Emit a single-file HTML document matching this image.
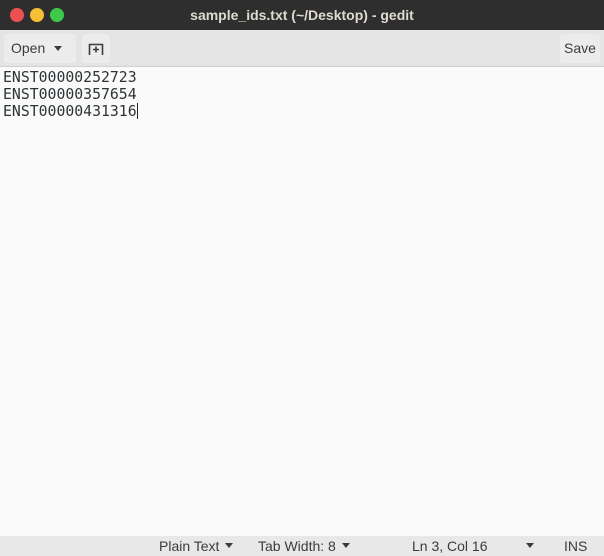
<!DOCTYPE html>
<html><head><style>
*{margin:0;padding:0;box-sizing:border-box}
body{width:604px;height:556px;overflow:hidden;background:#fafafa;font-family:"Liberation Sans","DejaVu Sans",sans-serif;position:relative}
.title{position:absolute;left:0;top:0;width:604px;height:30px;background:#2e2e2e;color:#dfdbd2;font-weight:bold;font-size:14px;text-align:center;line-height:30px}
.dot{position:absolute;top:8px;width:14px;height:14px;border-radius:50%}
.tb{position:absolute;top:30px;left:0;width:604px;height:37px;background:#e4e4e4;border-bottom:1px solid #d0d0d0}
.btn{position:absolute;top:4px;height:29px;background:#ececec;border-radius:3px;font-size:14px;color:#3c3c3c;line-height:29px}
.ed{position:absolute;top:69px;left:3px;font-family:"DejaVu Sans Mono",monospace;font-size:14.8px;line-height:17px;color:#2e3436}
.st{position:absolute;top:536px;left:0;width:604px;height:20px;background:#e8e8e8;font-size:14px;color:#3c3c3c;line-height:20px}
.st>span{position:absolute;top:0}
.ar{display:inline-block;width:0;height:0;border-left:4px solid transparent;border-right:4px solid transparent;border-top:5px solid #3c3c3c;position:relative;top:-3px;margin-left:6px}
</style></head><body>
<div class="title">sample_ids.txt (~/Desktop) - gedit
<div class="dot" style="left:10px;background:#ec5050"></div>
<div class="dot" style="left:30px;background:#f7bf34"></div>
<div class="dot" style="left:50px;background:#3ec94a"></div>
</div>
<div class="tb">
<div class="btn" style="left:4px;width:72px;padding-left:7px">Open<span class="ar" style="margin-left:9px;top:-2px"></span></div>
<div class="btn" style="left:82px;width:28px"><svg width="28" height="29" viewBox="0 0 28 29"><path d="M7.5 21V10.5h13V21M11 15.5h6M14 12.5v6" stroke="#3c3c3c" stroke-width="1.6" fill="none"/></svg></div>
<div class="btn" style="left:560px;width:40px;text-align:center">Save</div>
</div>
<div class="ed">ENST00000252723<br>ENST00000357654<br>ENST00000431316<span style="display:inline-block;width:1px;height:16px;background:#222;vertical-align:-3px"></span></div>
<div class="st">
<span style="left:159px">Plain Text<span class="ar"></span></span>
<span style="left:258px">Tab Width: 8<span class="ar"></span></span>
<span style="left:412px">Ln 3, Col 16</span>
<span style="left:520px"><span class="ar"></span></span>
<span style="left:564px">INS</span>
</div>
</body></html>
